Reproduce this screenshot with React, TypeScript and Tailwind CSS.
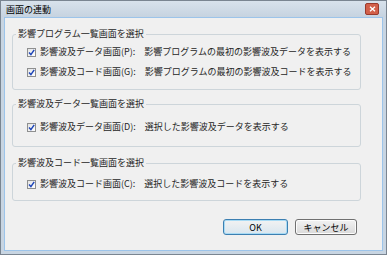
import React from "react";

function Check() {
  return (
    <span className="w-[9px] h-[9px] shrink-0 border border-[#8e8f8f] bg-linear-to-br from-[#e4e4e4] to-[#ffffff] flex items-center justify-center">
      <svg width="7" height="7" viewBox="0 0 7 7">
        <path d="M1 3.6 L2.9 5.6 L6.2 0.8" stroke="#1f46b8" strokeWidth="1.5" fill="none" />
      </svg>
    </span>
  );
}

function Row({ label, desc }: { label: string; desc: string }) {
  return (
    <div className="flex items-center h-[20px] pl-[14px] gap-[4px] whitespace-nowrap">
      <Check />
      <span>{label}</span>
      <span className="ml-[5px]">{desc}</span>
    </div>
  );
}

function Group({
  title,
  className,
  inner,
  children,
}: {
  title: string;
  className: string;
  inner: string;
  children: React.ReactNode;
}) {
  return (
    <fieldset className={`ml-[7px] w-[349px] border border-[#cdd5da] rounded-[3px] ${className}`}>
      <legend className="ml-[3px] px-[2px] leading-[12px]">{title}</legend>
      <div className={inner}>{children}</div>
    </fieldset>
  );
}

export default function App() {
  return (
    <div className="w-[387px] h-[255px] border border-[#7a8591] bg-[#c8d5e2] flex flex-col font-['Noto_Sans_CJK_JP','Noto_Sans',sans-serif] text-[9px] text-[#262626]">
      <div className="h-[16px] shrink-0 flex items-center justify-between bg-linear-to-b from-[#d8e2ec] to-[#c6d3e0]">
        <span className="pl-[5px] text-[9px] text-black leading-none">画面の連動</span>
        <span className="mr-[7px] w-[14px] h-[12px] rounded-[2px] border border-[#9a3a2c] bg-[#d2604a] flex items-center justify-center">
          <svg width="7" height="6" viewBox="0 0 7 6">
            <path d="M1 0.8 L6 5.2 M6 0.8 L1 5.2" stroke="#ffffff" strokeWidth="1.3" />
          </svg>
        </span>
      </div>
      <div className="flex-1 mx-[3px] mb-[3px] border border-[#9cc4ea] bg-[#f0f0f0] flex flex-col">
        <Group title="影響プログラム一覧画面を選択" className="mt-[10px]" inner="pt-[2px] pb-[7px]">
          <Row label="影響波及データ画面(P):" desc="影響プログラムの最初の影響波及データを表示する" />
          <Row label="影響波及コード画面(G):" desc="影響プログラムの最初の影響波及コードを表示する" />
        </Group>
        <Group title="影響波及データ一覧画面を選択" className="mt-[8px]" inner="pt-[7px] pb-[9px]">
          <Row label="影響波及データ画面(D):" desc="選択した影響波及データを表示する" />
        </Group>
        <Group title="影響波及コード一覧画面を選択" className="mt-[10px]" inner="pt-[5px] pb-[6px]">
          <Row label="影響波及コード画面(C):" desc="選択した影響波及コードを表示する" />
        </Group>
        <div className="mt-[18px] flex justify-end gap-[7px] mr-[25px]">
          <button className="w-[65px] h-[16px] rounded-[3px] border border-[#3c7fb1] bg-linear-to-b from-[#f2f2f2] to-[#d9e6ef] shadow-[inset_0_0_0_1px_#a8dbf5] text-[9px] leading-none text-black">
            OK
          </button>
          <button className="w-[62px] h-[16px] rounded-[3px] border border-[#707070] bg-linear-to-b from-[#f2f2f2] to-[#dadada] shadow-[inset_0_0_0_1px_#fcfcfc] text-[9px] leading-none text-black">
            キャンセル
          </button>
        </div>
      </div>
    </div>
  );
}
